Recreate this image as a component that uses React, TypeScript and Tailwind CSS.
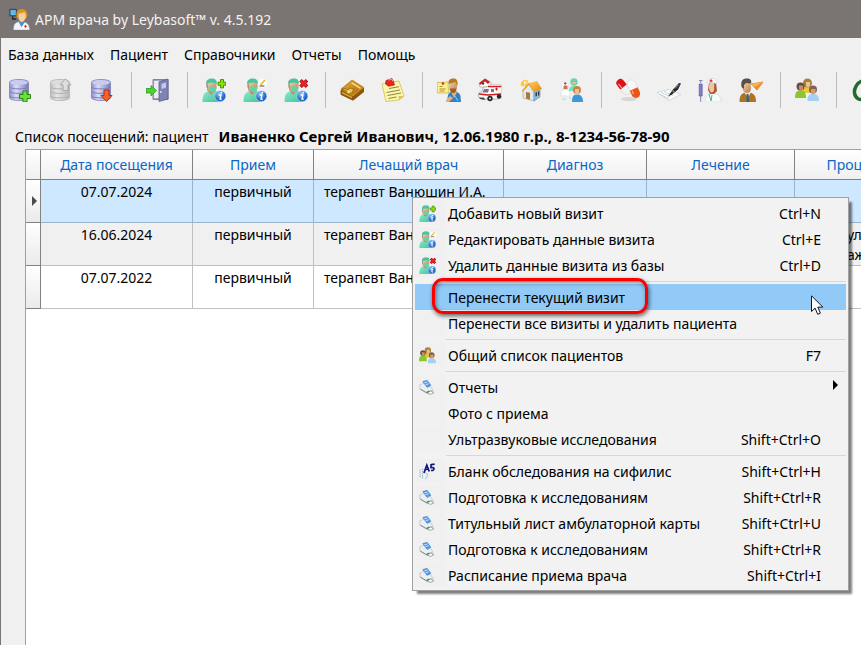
import type { ReactNode } from "react";

type DrawingProps = { size?: number };

function Drawing({ size = 24, children }: DrawingProps & { children: ReactNode }) {
  return (
    <svg width={size} height={size} viewBox="0 0 24 24" aria-hidden="true" className="shrink-0">
      {children}
    </svg>
  );
}

function Gradients() {
  return (
    <svg width="0" height="0" className="absolute" aria-hidden="true">
      <defs>
        <linearGradient id="dbBlue">
          <stop offset="0" stopColor="#8d90c8" />
          <stop offset=".35" stopColor="#dcdef8" />
          <stop offset="1" stopColor="#7779b2" />
        </linearGradient>
        <linearGradient id="dbGray">
          <stop offset="0" stopColor="#bfbfbf" />
          <stop offset=".35" stopColor="#e6e6e6" />
          <stop offset="1" stopColor="#bababa" />
        </linearGradient>
        <linearGradient id="scrubs" x2="1" y2="1">
          <stop offset="0" stopColor="#8fe8cc" />
          <stop offset="1" stopColor="#3cc49a" />
        </linearGradient>
        <radialGradient id="infoBall" cx=".4" cy=".3">
          <stop offset="0" stopColor="#9ccdfb" />
          <stop offset="1" stopColor="#1f68c8" />
        </radialGradient>
        <linearGradient id="leather" x2="1" y2="1">
          <stop offset="0" stopColor="#e8b23c" />
          <stop offset="1" stopColor="#a3640c" />
        </linearGradient>
        <linearGradient id="skin" x2="1" y2="1">
          <stop offset="0" stopColor="#f6cfa0" />
          <stop offset="1" stopColor="#b87b4e" />
        </linearGradient>
        <linearGradient id="roof" x2="1" y2="1">
          <stop offset="0" stopColor="#ffd166" />
          <stop offset="1" stopColor="#e8850c" />
        </linearGradient>
      </defs>
    </svg>
  );
}

function Cylinder({ gray }: { gray?: boolean }) {
  const line = gray ? "#b0b0b0" : "#7d80b8";
  return (
    <g>
      <path
        d="M1.500 4.500C1.500 2.600 5.600 1.500 11 1.500s9.500 1.100 9.500 3v15c0 1.900-4.100 3-9.500 3s-9.500-1.100-9.500-3z"
        fill={gray ? "url(#dbGray)" : "url(#dbBlue)"}
        stroke={line}
        strokeWidth=".8"
      />
      <ellipse cx="11" cy="4.500" rx="9" ry="2.600" fill={gray ? "#dcdcdc" : "#c9cbf0"} />
      <path
        d="M1.500 9c1 2.500 18 2.500 19 0M1.500 13.500c1 2.500 18 2.500 19 0M1.500 18c1 2.500 18 2.500 19 0"
        fill="none"
        stroke={line}
      />
    </g>
  );
}

function DbAdd() {
  return (
    <Drawing>
      <Cylinder />
      <path d="M15 13h4v3.500h3.500v4H19V24h-4v-3.500h-3.500v-4H15z" fill="#6ede3c" stroke="#278a10" />
    </Drawing>
  );
}

function DbUpload() {
  return (
    <Drawing>
      <Cylinder gray />
      <path d="M16.500.8l5.500 6h-3v5.700h-5V6.800h-3z" fill="#dedede" stroke="#a8a8a8" />
    </Drawing>
  );
}

function DbDownload() {
  return (
    <Drawing>
      <Cylinder />
      <path d="M14 12h5v5.500h3l-5.500 6-5.500-6h3z" fill="#f5622b" stroke="#b5310a" />
    </Drawing>
  );
}

function ExitDoor() {
  return (
    <Drawing>
      <path d="M7 1.500h15v20H7z" fill="#a3a6b5" stroke="#80849a" />
      <path d="M8 3h5v17H8z" fill="#e9ebf2" />
      <path d="M13 4l9-3v20l-9 2.500z" fill="#8084b4" stroke="#5c608f" strokeWidth=".8" />
      <path d="M15.500 6l4.500-1.400v5L15.500 11z" fill="#c6caea" />
      <circle cx="14.800" cy="14" r=".9" fill="#e8e8f4" />
      <path d="M0 10.500h5V7.500l5.500 5-5.500 5.500V15H0z" fill="#4fce35" stroke="#2d9a22" strokeWidth=".8" />
    </Drawing>
  );
}

function Surgeon() {
  return (
    <g>
      <path d="M.5 24c0-6 1-9.500 5.500-10.500l8-.5c3.500 1.500 4 4 4 11z" fill="url(#scrubs)" />
      <path d="M5 12l4 5 4-5-1-3H6z" fill="#c98b60" />
      <path d="M5 4.500h9.500v4c0 4-2 6-4.500 6s-5-2-5-6z" fill="url(#skin)" />
      <path d="M6.500 8.500l8 .2c0 3.500-1.500 5.500-4 5.500-2 0-4-2-4-5.700z" fill="#62d2b0" />
      <path d="M4 6C4 1.800 6.500.5 10 .5c3 0 5 1.500 5 5-4-1-7-1-11 .5z" fill="#4cc39d" />
      <path d="M5 5.500C4 7 4.500 10 5.500 11V6z" fill="#8a6548" />
    </g>
  );
}

function InfoBall() {
  return (
    <g>
      <circle cx="18.300" cy="18.200" r="5.500" fill="url(#infoBall)" stroke="#c8dcf2" strokeWidth=".6" />
      <path d="M16.800 17h2.200l-1 4.200h1.800" fill="none" stroke="#fff" strokeWidth="1.300" />
      <circle cx="19.300" cy="14.700" r=".9" fill="#fff" />
    </g>
  );
}

function VisitAdd({ size }: DrawingProps) {
  return (
    <Drawing size={size}>
      <Surgeon />
      <InfoBall />
      <path d="M18.500 1.500h3v2.700h2.400v3h-2.400v2.700h-3V7.200H16v-3h2.500z" fill="#8ee000" stroke="#3c8a06" strokeWidth=".9" />
    </Drawing>
  );
}

function VisitEdit({ size }: DrawingProps) {
  return (
    <Drawing size={size}>
      <Surgeon />
      <InfoBall />
      <circle cx="19.500" cy="5.500" r="4.500" fill="#fff" />
      <path d="M17.500 7l4.500-5" stroke="#e9b72d" strokeWidth="1.700" />
      <path d="M16.500 8h5" stroke="#4d4939" />
    </Drawing>
  );
}

function VisitDelete({ size }: DrawingProps) {
  return (
    <Drawing size={size}>
      <Surgeon />
      <InfoBall />
      <path d="M17.800 3.500l4 4m0-4l-4 4" stroke="#a80b12" strokeWidth="3.600" strokeLinecap="square" />
      <path d="M17.800 3.500l4 4m0-4l-4 4" stroke="#ee2227" strokeWidth="2.200" strokeLinecap="square" />
    </Drawing>
  );
}

function Wallet() {
  return (
    <Drawing>
      <g strokeLinejoin="round">
        <path d="M1.500 13L12 3.500 23 10v3.500L13 21.500 1.500 16z" fill="#8b560c" stroke="#8b560c" strokeWidth="2" />
        <path d="M1.500 11L12 2.500 23 9.500 13 17.500z" fill="url(#leather)" stroke="#c98d22" strokeWidth="1.500" />
        <path d="M2 14.500l10 5" stroke="#d9a238" strokeWidth="1.500" />
        <path d="M12 5l8 5" stroke="#f7d67e" strokeWidth="1.500" strokeLinecap="round" />
        <path d="M2 11l5 2.500 4 2 3-4-4-1.500-2 2-3-1.500z" fill="#efc352" stroke="#7a4a08" strokeWidth=".6" />
        <circle cx="8.500" cy="14" r="1.200" fill="#ffef9b" />
      </g>
    </Drawing>
  );
}

function StickyNote() {
  return (
    <Drawing>
      <path d="M1 6l17-3 5 15-5 4-13 1.500z" fill="#fdf6a4" stroke="#d1bd5c" strokeWidth=".8" />
      <path d="M23 18l-5 4-.5-4z" fill="#d9c260" />
      <path d="M8 10.500l10-1.800M5.500 14.500L19 12M6.500 17.500L20 15M7.500 20.500l8-1.500" stroke="#80764b" strokeWidth=".9" />
      <path d="M5 2.500l6-2 1.500 3 1 3.500-6 1.200L4.500 6z" fill="#e8281f" stroke="#920d0b" strokeWidth=".6" />
      <path d="M7.500 2l3.500-.8.8 2" stroke="#ff9d90" fill="none" />
    </Drawing>
  );
}

function PatientNote() {
  return (
    <Drawing>
      <path d="M10 24l1-7c1-3 4-4 6-4s6 2 6.500 5l.5 6z" fill="#2d83c5" />
      <path d="M14 14l3 6 3-6z" fill="#e7ae7d" />
      <path d="M12 4h8v5c0 4-2 6-4 6s-4-2.500-4-6z" fill="url(#skin)" />
      <path d="M11.500 6C11 2 13 .5 16.500.5 20 .5 21 3 20.500 8l-2-4z" fill="#b67a26" />
      <path d="M13 10.500h6c0 3-1 4.500-3 4.500s-3-2-3-4.500z" fill="#9b5d20" />
      <path d="M0 4.500l11-.5.5 11H.5z" fill="#fff08a" stroke="#c9ae47" strokeWidth=".7" />
      <path d="M2.500 8.500h3M2.500 11h6M2.500 13h5" stroke="#8a7c38" strokeWidth=".8" />
      <circle cx="6" cy="5.500" r="1.300" fill="#df2420" />
      <path d="M9 22l4-4 3 2-4 4H9z" fill="#e8ae7b" />
      <path d="M18 18l3 5" stroke="#7fd0f4" />
    </Drawing>
  );
}

function Ambulance() {
  return (
    <Drawing>
      <path d="M1 6l6-5 6 3v5H2z" fill="#fff" stroke="#9b9b9b" strokeWidth=".6" />
      <path d="M1 5l6-4.500L12 4l-2 2-3-2.500L2 7z" fill="#c72621" />
      <path d="M4 5l2 1" stroke="#513c2d" strokeWidth="2" />
      <path d="M9 9l2-2h12l1 3v9l-3 2H4l-3.500-2v-4l3-1 2-5z" fill="#fafafa" stroke="#98a0a8" strokeWidth=".7" />
      <path d="M10 8.700h13M1 16l9 1 13-1" stroke="#d7191e" strokeWidth="1.300" fill="none" />
      <path d="M6 11h5l-1 3.500H4.500zM13 11h3v3h-3z" fill="#6b7c8a" />
      <circle cx="12" cy="20.500" r="2.700" fill="#25282b" />
      <circle cx="12" cy="20.500" r="1.100" fill="#cacdd0" />
      <circle cx="21" cy="18.500" r="2.200" fill="#25282b" />
      <path d="M1 19.500h5l1 2.500-5-1z" fill="#474b50" />
      <path d="M18.500 9.500v3M17 11h3" stroke="#d7191e" />
    </Drawing>
  );
}

function House() {
  return (
    <Drawing>
      <path d="M1 5l4-4 5 1.500L8 8l-6 1z" fill="#ffc452" stroke="#fff" strokeWidth=".6" />
      <path d="M5 3l3 1-3 3z" fill="#fff5df" />
      <path d="M4 12l6-6.500 5 8V23L4 20z" fill="#dcebf5" stroke="#82a2b6" strokeWidth=".6" />
      <path d="M15 13l6-2v8l-6 4z" fill="#93bdd6" stroke="#608da9" strokeWidth=".6" />
      <path d="M10 5L18 3l5 8-8 2.500z" fill="url(#roof)" />
      <path d="M10 4.500l-7.500 8.500 1.500.5 6-6.500 4.500 7 1-.5z" fill="#f2a02c" />
      <path d="M7 14l4 .8v7l-4-1.200z" fill="#b3762f" />
      <path d="M16.500 14.500l1.500-.5v4l-1.500.5zM19 13.500l1.300-.3v4l-1.300.5z" fill="#333c46" />
    </Drawing>
  );
}

function Consultation() {
  return (
    <Drawing>
      <path d="M9 13c0-4 2-5 5-5s4 1 4 5z" fill="#7adfbd" />
      <circle cx="14" cy="4" r="3.700" fill="#69d3b0" />
      <path d="M12 4h4v2h-4z" fill="#eeba8b" />
      <path d="M1 18c0-5 1-6.500 4.500-6.500S10 14 10 18z" fill="#fff" stroke="#d0d6da" strokeWidth=".6" />
      <circle cx="5" cy="7.800" r="3.800" fill="#fff" stroke="#d0d6da" strokeWidth=".5" />
      <path d="M3.500 7.500h4v3.500h-4z" fill="#b97a54" />
      <path d="M4 5.500h2.500M5.200 4.200v2.500" stroke="#e32121" strokeWidth="1.100" />
      <path d="M12 24c0-5 1-7.500 5-7.500s6 2.500 6 7.500z" fill="#3c96da" />
      <circle cx="17" cy="12" r="4" fill="#cc8245" />
      <path d="M15 11h4v4l-2 2-2-2z" fill="#f0be91" />
      <path d="M2 21h4M9 20h2" stroke="#a4dfcc" />
    </Drawing>
  );
}

function Pills() {
  return (
    <Drawing>
      <ellipse cx="13" cy="21" rx="8" ry="2" fill="#d6d6d6" />
      <g transform="rotate(-38 7.500 9)">
        <rect x="3.500" y="0" width="8" height="18" rx="4" fill="#f1f1f1" stroke="#cdcdcd" strokeWidth=".5" />
        <path d="M3.500 9V4a4 4 0 0 1 8 0v5z" fill="#dd1118" />
        <path d="M5.500 8V4" stroke="#ff9b95" strokeWidth="1.300" strokeLinecap="round" />
      </g>
      <g transform="rotate(-24 17.500 11)">
        <rect x="13.500" y="1.500" width="8.500" height="19" rx="4.250" fill="#f7f7f7" stroke="#d0d0d0" strokeWidth=".5" />
        <path d="M13.500 11h8.500v5.200a4.250 4.250 0 0 1-8.500 0z" fill="#ec5416" />
        <path d="M15.500 12v3.500" stroke="#ffb081" strokeWidth="1.300" />
      </g>
    </Drawing>
  );
}

function PenPaper() {
  return (
    <Drawing>
      <path d="M0 14.500l12-3 12 5-12 6z" fill="#fcfcfc" stroke="#c5ccd2" strokeWidth=".7" />
      <path d="M4 14.500l9 4M7 13.500l9 4M3 16.500l9 4" stroke="#b4c4d0" strokeWidth=".7" />
      <path d="M11 18.500l5-7L22 5l2 .5-3 6-6 5z" fill="#24282e" />
      <path d="M18 10.500l4-4" stroke="#9ba0a5" />
      <path d="M15.500 12.500l2 2" stroke="#c28c48" strokeWidth="1.200" />
    </Drawing>
  );
}

function Nurse() {
  return (
    <Drawing>
      <path d="M2.700 5V2M1 2.500h3.500M2.700 17v7" stroke="#8286b7" />
      <path d="M1.200 6h3v12h-3z" fill="#7c81c4" stroke="#4f5399" strokeWidth=".6" />
      <path d="M7 24c.5-6 2-8.500 7.500-8.500S23 18 23.500 24z" fill="#f8f9fb" stroke="#cdd3d9" strokeWidth=".6" />
      <path d="M11 5h7l1 8-3 3h-4l-2-4z" fill="#a95732" />
      <path d="M11.500 5h4.700v6c0 2-1 3.500-2.500 3.500S11 12 11 9z" fill="#f2c59e" />
      <path d="M9.500 5C9 1.500 11.500.5 14 .5s5.500 1.500 4.500 5.500c-3-2-6-2-9-1z" fill="#fff" stroke="#c6ced6" strokeWidth=".6" />
      <path d="M11.500 2.800h3M13 1.300v3" stroke="#e02222" strokeWidth="1.200" />
      <path d="M11 16l2 7 1-6" fill="none" stroke="#45b988" />
    </Drawing>
  );
}

function Announcer() {
  return (
    <Drawing>
      <path d="M.5 24c0-7 2-9.500 8-9.500S17 17 17 24z" fill="#b07420" />
      <path d="M5 14l4 6 3-6z" fill="#eceae1" />
      <path d="M7.500 16h2l1 8h-3z" fill="#2e6485" />
      <path d="M3.500 5h8l.5 5c0 3-1.500 5-4 5s-4.500-2-4.500-5z" fill="url(#skin)" />
      <path d="M2.500 9C1.500 3 3.500.5 8 .5c3.500 0 5 2 4 5L7 5l-2 2v4z" fill="#56504b" />
      <path d="M12 6l12-2-6 8-3-3z" fill="#f39122" stroke="#ca6b0b" strokeWidth=".6" />
      <path d="M12 6l12-2-9 5z" fill="#ffb24d" />
    </Drawing>
  );
}

function People({ size }: DrawingProps) {
  return (
    <Drawing size={size}>
      <path d="M7 15c0-5 1.500-6 6-6s5 1 5 6z" fill="#e9c838" />
      <circle cx="12.500" cy="5" r="4.500" fill="#a9803a" />
      <path d="M11 4h4v4l-2 1.500L11 8z" fill="#edc28e" />
      <path d="M0 20c0-5 1-7.500 5.500-7.500S11 15 11 20z" fill="#8cc62f" />
      <circle cx="5.500" cy="8.500" r="4" fill="#625045" />
      <path d="M4 7.500h4v4L6 13l-2-2z" fill="#c98e61" />
      <path d="M12.500 23c0-5 1-7 5.500-7s6 2 6 7z" fill="#a5d0f3" />
      <circle cx="18" cy="11.500" r="4" fill="#85604a" />
      <path d="M16 11h4.500v4L18 16.500 16 15z" fill="#d99b6a" />
    </Drawing>
  );
}

function GreenRing() {
  return (
    <Drawing>
      <ellipse cx="12" cy="12" rx="10" ry="8" transform="rotate(-60 12 12)" fill="none" stroke="#236b2c" strokeWidth="3.500" />
    </Drawing>
  );
}

function DoctorApp() {
  return (
    <Drawing size={22}>
      <path d="M1 1.500h7v7H1z" fill="#65b9e8" stroke="#263746" />
      <path d="M4 9v3h4" stroke="#1f2b36" fill="none" strokeWidth="1.500" />
      <path d="M5 24c0-7 2-9 8-9s9 2 9.500 9z" fill="#f2f6fc" stroke="#9fb2c7" strokeWidth=".6" />
      <path d="M10.500 15l3 6 4-6z" fill="#4f8fc9" />
      <circle cx="14" cy="7" r="6" fill="#dc9425" />
      <path d="M10.500 6c3 0 5-1 6-2l2 4c0 4-2 7-4.500 7s-3.500-3-3.500-6z" fill="#f8d0a0" />
      <path d="M18 18.500v3M16.500 20h3" stroke="#e12525" />
    </Drawing>
  );
}

function Printer() {
  return (
    <Drawing size={15}>
      <path d="M1 8l7-3 12 7 3 7-8 3L2 15z" fill="#eceef0" stroke="#a4abb2" strokeWidth=".8" />
      <path d="M6 2.500L13 .5l6 8-6 3.500z" fill="#4b9af0" stroke="#2f72c2" strokeWidth=".8" />
      <path d="M8.500 4.500l5-1.500M10.500 7.500l5-1.500" stroke="#d6ebff" strokeWidth="1.500" />
      <path d="M2 14.500l10 6 8-3" stroke="#757c86" strokeWidth="1.400" fill="none" />
      <path d="M12 20l7-2.500 4.500 3-5 2.500z" fill="#fff" stroke="#68717b" />
      <path d="M12.500 19.500l4-1.500" stroke="#36a747" strokeWidth="2.500" />
    </Drawing>
  );
}

function BloodForm() {
  return (
    <Drawing size={17}>
      <path d="M1.500 9v12M5 8v14M9 14c4 0 4 5 0 8" stroke="#8cbdd0" strokeWidth="1.500" strokeDasharray="2 1" fill="none" />
      <path d="M7 14l4-11 3.500 9M8.500 9.500l5-1M22 1.500l-5 1v4c6-1 5 5 0 4" stroke="#11147a" strokeWidth="2.400" fill="none" />
    </Drawing>
  );
}

type Tool = { label: string; icon: ReactNode; disabled?: boolean };

const toolGroups: Tool[][] = [
  [
    { label: "Создать базу", icon: <DbAdd /> },
    { label: "Сохранить базу", icon: <DbUpload />, disabled: true },
    { label: "Загрузить базу", icon: <DbDownload /> },
  ],
  [{ label: "Выход", icon: <ExitDoor /> }],
  [
    { label: "Добавить визит", icon: <VisitAdd /> },
    { label: "Редактировать визит", icon: <VisitEdit /> },
    { label: "Удалить визит", icon: <VisitDelete /> },
  ],
  [
    { label: "Кошелек", icon: <Wallet /> },
    { label: "Заметки", icon: <StickyNote /> },
  ],
  [
    { label: "Карта пациента", icon: <PatientNote /> },
    { label: "Скорая помощь", icon: <Ambulance /> },
    { label: "Вызов на дом", icon: <House /> },
    { label: "Консилиум", icon: <Consultation /> },
  ],
  [
    { label: "Лекарства", icon: <Pills /> },
    { label: "Рецепты", icon: <PenPaper /> },
    { label: "Медсестра", icon: <Nurse /> },
    { label: "Объявления", icon: <Announcer /> },
  ],
  [{ label: "Общий список", icon: <People /> }],
  [{ label: "Обновить", icon: <GreenRing /> }],
];

const mainMenu = ["База данных", "Пациент", "Справочники", "Отчеты", "Помощь"];

const columns = ["Дата посещения", "Прием", "Лечащий врач", "Диагноз", "Лечение", "Процедуры"];

const visits = [
  { date: "07.07.2024", kind: "первичный", doctor: "терапевт Ванюшин И.А.", procedures: [], tone: "bg-[#cde8ff]", line: "border-[#9db4c8]" },
  { date: "16.06.2024", kind: "первичный", doctor: "терапевт Ванюшин И.А.", procedures: ["ул", "аж"], tone: "bg-[#f0f0f0]", line: "border-[#c0c0c0]" },
  { date: "07.07.2022", kind: "первичный", doctor: "терапевт Ванюшин И.А.", procedures: [], tone: "bg-white", line: "border-[#c0c0c0]" },
];

type Entry = { label: string; keys?: string; icon?: ReactNode; submenu?: boolean; active?: boolean };

const contextGroups: Entry[][] = [
  [
    { label: "Добавить новый визит", keys: "Ctrl+N", icon: <VisitAdd size={17} /> },
    { label: "Редактировать данные визита", keys: "Ctrl+E", icon: <VisitEdit size={17} /> },
    { label: "Удалить данные визита из базы", keys: "Ctrl+D", icon: <VisitDelete size={17} /> },
  ],
  [
    { label: "Перенести текущий визит", active: true },
    { label: "Перенести все визиты и удалить пациента" },
  ],
  [{ label: "Общий список пациентов", keys: "F7", icon: <People size={17} /> }],
  [
    { label: "Отчеты", icon: <Printer />, submenu: true },
    { label: "Фото с приема" },
    { label: "Ультразвуковые исследования", keys: "Shift+Ctrl+O" },
  ],
  [
    { label: "Бланк обследования на сифилис", keys: "Shift+Ctrl+H", icon: <BloodForm /> },
    { label: "Подготовка к исследованиям", keys: "Shift+Ctrl+R", icon: <Printer /> },
    { label: "Титульный лист амбулаторной карты", keys: "Shift+Ctrl+U", icon: <Printer /> },
    { label: "Подготовка к исследованиям", keys: "Shift+Ctrl+R", icon: <Printer /> },
    { label: "Расписание приема врача", keys: "Shift+Ctrl+I", icon: <Printer /> },
  ],
];

function ContextEntry({ entry }: { entry: Entry }) {
  return (
    <button
      type="button"
      role="menuitem"
      className={`flex h-[26px] w-full items-center text-left ${entry.active ? "bg-[#91c9f7]" : ""}`}
    >
      <span className={`flex h-6 w-[30px] shrink-0 items-center pl-1 ${entry.active ? "" : "bg-[#f0f0f0]"}`}>
        {entry.icon}
      </span>
      <span className="ml-[3px] grow pt-[2px] whitespace-nowrap">{entry.label}</span>
      {entry.keys && <span className="mr-[25px] pt-[2px] whitespace-nowrap">{entry.keys}</span>}
      {entry.submenu && (
        <svg width="5" height="10" viewBox="0 0 5 10" className="mr-2 mb-1" aria-hidden="true">
          <path d="M0 0l5 5-5 5z" fill="#000" />
        </svg>
      )}
    </button>
  );
}

function ContextMenu() {
  return (
    <div
      role="menu"
      className="absolute top-[197px] left-[411px] w-[437px] border border-[#a0a0a0] bg-[#f2f2f2] p-[2px] shadow-[4px_4px_2px_-1px_rgba(0,0,0,0.5)]"
    >
      {contextGroups.map((group, index) => (
        <div key={index}>
          {index > 0 && (
            <div className="flex h-[6px] items-center pl-[31px]">
              <hr className="grow border-[#d7d7d7]" />
            </div>
          )}
          {group.map((entry, i) => (
            <ContextEntry key={i} entry={entry} />
          ))}
        </div>
      ))}
      <div className="pointer-events-none absolute top-[80px] left-[19px] h-9 w-[216px] rounded-[11px] border-3 border-[#f80000] shadow-[1px_2px_4px_rgba(0,0,0,0.6),inset_1px_2px_4px_rgba(0,0,0,0.45)]" />
      <svg
        width="14"
        height="21"
        viewBox="0 0 14 21"
        className="pointer-events-none absolute top-[97px] left-[398px]"
        aria-hidden="true"
      >
        <path d="M.5.800v15.700l3.600-3.400 2.600 6.200 2.700-1.100-2.600-6.100h5z" fill="#fff" stroke="#101828" />
      </svg>
    </div>
  );
}

export default function App() {
  return (
    <div className="relative flex h-screen flex-col overflow-hidden border-l border-[#7a7472] bg-[#f0f0f0] font-['Noto_Sans','Open_Sans',sans-serif] text-sm leading-5 text-black">
      <Gradients />
      <header className="flex h-[38px] shrink-0 items-center gap-1 bg-[#7a7472] pl-2 text-[#f4f2f1]">
        <DoctorApp />
        <h1 className="pt-[2px]">АРМ врача by Leybasoft™ v. 4.5.192</h1>
      </header>

      <nav className="flex h-[34px] shrink-0 items-center gap-4 pl-[7px]">
        {mainMenu.map((item) => (
          <button key={item} type="button">
            {item}
          </button>
        ))}
      </nav>

      <div role="toolbar" className="flex h-9 shrink-0 overflow-hidden">
        {toolGroups.map((group, index) => (
          <div key={index} className="flex shrink-0">
            {index > 0 && <div className="ml-[7px] w-2 border-l border-[#bcbcbc]" />}
            {group.map((tool) => (
              <button
                key={tool.label}
                type="button"
                aria-label={tool.label}
                disabled={tool.disabled}
                className="flex w-[41px] items-center pl-[7px]"
              >
                {tool.icon}
              </button>
            ))}
          </div>
        ))}
      </div>

      <p className="mt-[18px] mb-[3px] flex h-5 items-baseline gap-[10px] pl-[14px] whitespace-nowrap">
        <span>Список посещений: пациент</span>
        <strong className="text-[15px] leading-5 font-bold">Иваненко Сергей Иванович, 12.06.1980 г.р., 8-1234-56-78-90</strong>
      </p>

      <main className="ml-6 grow overflow-hidden border-t border-l border-[#a0a0a0] bg-white">
        <table className="w-[911px] table-fixed border-separate border-spacing-0">
          <colgroup>
            <col className="w-[15px]" />
            <col className="w-[152px]" />
            <col className="w-[121px]" />
            <col className="w-[190px]" />
            <col className="w-[143px]" />
            <col className="w-[148px]" />
            <col />
          </colgroup>
          <thead>
            <tr className="h-[30px] bg-linear-to-b from-white to-[#f0f0f0]">
              <td className="border-r border-b border-[#828282]" />
              {columns.map((name) => (
                <th key={name} scope="col" className="border-r border-b border-[#828282] p-0 font-normal text-[#0a66c8]">
                  {name}
                </th>
              ))}
            </tr>
          </thead>
          <tbody>
            {visits.map((visit, index) => (
              <tr key={visit.date} className={`h-[43px] align-top ${visit.tone}`}>
                <td className="border-r border-b border-[#828282] bg-linear-to-b from-white to-[#ebebeb] p-0 align-middle">
                  {index === 0 && (
                    <svg width="5" height="10" viewBox="0 0 5 10" className="ml-[6px]" aria-label="Текущая запись">
                      <path d="M0 0l5 5-5 5z" fill="#4a4a4a" />
                    </svg>
                  )}
                </td>
                <td className={`border-r border-b p-0 pt-[2px] text-center ${visit.line}`}>{visit.date}</td>
                <td className={`border-r border-b p-0 pt-[2px] text-center ${visit.line}`}>{visit.kind}</td>
                <td className={`border-r border-b p-0 pt-[2px] pl-[10px] whitespace-nowrap ${visit.line}`}>{visit.doctor}</td>
                <td className={`border-r border-b p-0 ${visit.line}`} />
                <td className={`border-r border-b p-0 ${visit.line}`} />
                <td className={`border-r border-b p-0 pt-[2px] pl-[52px] ${visit.line}`}>
                  {visit.procedures.map((line) => (
                    <div key={line}>{line}</div>
                  ))}
                </td>
              </tr>
            ))}
          </tbody>
        </table>
      </main>

      <ContextMenu />
    </div>
  );
}
